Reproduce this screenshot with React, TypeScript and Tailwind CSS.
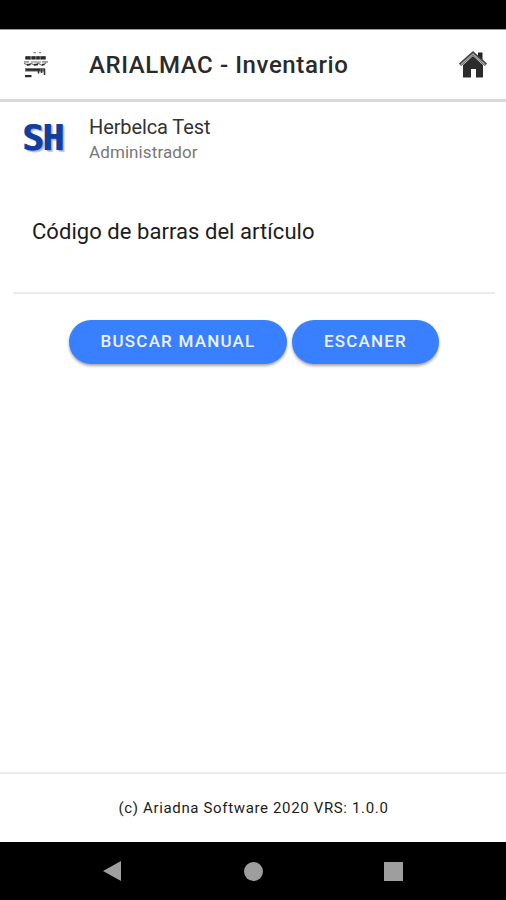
const MenuIcon = () => (
  <svg width="28" height="30" viewBox="0 0 28 30" fill="#2a2a2a">
    <rect x="11.5" y="2" width="2.5" height="1.2" fill="#888" />
    <rect x="17" y="2" width="2" height="1.2" fill="#888" />
    <rect x="3" y="6.2" width="21" height="3.4" fill="#666" />
    <rect x="4" y="6.4" width="4" height="2.8" />
    <rect x="10" y="6.4" width="3" height="2.8" />
    <rect x="14.5" y="6.4" width="3" height="2.8" />
    <rect x="19" y="6.4" width="4" height="2.8" />
    <path
      d="M2 11.8h5M9 12h10M20 11.8h6M2 13.2l4 2.2 3-2 4 2 3-2.2 4 2.2 4-2.4"
      fill="none"
      stroke="#777"
      strokeWidth="1.2"
    />
    <rect x="5" y="13.8" width="3.5" height="1.6" />
    <rect x="12" y="13.8" width="4" height="1.6" />
    <rect x="20" y="13.8" width="2.5" height="1.6" />
    <rect x="3" y="18" width="20" height="3.6" fill="#777" />
    <path d="M4 19.8h14" stroke="#222" strokeWidth="1.6" />
    <path d="M16.5 20v3.5M19.5 19v4M22.5 19v6" stroke="#333" strokeWidth="1.6" />
    <rect x="3" y="25" width="6.5" height="2.2" />
  </svg>
);

const HomeIcon = () => (
  <svg width="30" height="28" viewBox="0 0 30 28">
    <path d="M20 1.5h4.5V10L20 6z" fill="#222" />
    <path d="M5 14 15 5l10 9v12.5h-7V18h-5v8.5H5z" fill="#2b2b2b" />
    <path d="M2 13.8 15 2.2l13 11.6" fill="none" stroke="#444" strokeWidth="3.2" />
    <path d="M2.8 13.8 15 3l12.2 10.8" fill="none" stroke="#a8a8a8" strokeWidth="1.3" />
  </svg>
);

const Logo = () => (
  <div className="font-['DejaVu_Sans_Mono',monospace] font-bold text-[36px] leading-[46px] tracking-[-1.5px] whitespace-nowrap text-[#123f9e] [text-shadow:1px_0_0_#123f9e,2px_1px_1px_#93a7db,3px_2px_1px_#c3cce8]">
    SH
  </div>
);

const buttonClass =
  "h-11 rounded-full bg-[#3880ff] text-[#ebf2ff] text-[17px] font-medium tracking-[1.2px] pb-[1px] shadow-[0_2px_3px_rgba(0,0,0,0.35)]";

const App = () => {
  return (
    <div className="flex flex-col h-[900px] w-full bg-white text-[#1c1c1c] font-['Roboto',sans-serif]">
      <div className="h-[29px] bg-black shrink-0" />

      <header className="flex items-center h-[73px] shrink-0 border-t border-t-[#999] border-b-3 border-b-[#d9d9d9] pl-[22px] pr-[18px]">
        <button className="w-[67px]" aria-label="Menu">
          <MenuIcon />
        </button>
        <h1 className="text-2xl font-medium whitespace-nowrap tracking-[0.6px] text-[#2a2a2a]">
          ARIALMAC - Inventario
        </h1>
        <button className="ml-auto" aria-label="Home">
          <HomeIcon />
        </button>
      </header>

      <main className="flex-1">
        <div className="flex pl-[22px] pt-[13px] h-[90px]">
          <div className="w-[67px]">
            <Logo />
          </div>
          <div>
            <h2 className="text-xl leading-[24px] tracking-[-0.1px] text-[#333]">
              Herbelca Test
            </h2>
            <p className="text-[17px] leading-[26px] tracking-[0.1px] text-[#777]">
              Administrador
            </p>
          </div>
        </div>

        <div className="ml-[13px] mr-[11px] h-[102px] border-b-2 border-[#ebebeb] pl-[19px] pt-[25px]">
          <label className="text-[22px] leading-[30px] tracking-[0.05px]">
            Código de barras del artículo
          </label>
        </div>

        <div className="flex justify-center gap-[5px] pt-[26px] pl-[2px]">
          <button className={`${buttonClass} w-[218px]`}>BUSCAR MANUAL</button>
          <button className={`${buttonClass} w-[147px]`}>ESCANER</button>
        </div>
      </main>

      <footer className="flex items-center justify-center h-[70px] shrink-0 border-t-2 border-[#ebebeb] pl-[1px] text-[15px] tracking-[0.65px]">
        (c) Ariadna Software 2020 VRS: 1.0.0
      </footer>

      <nav className="flex items-center justify-between h-[58px] shrink-0 bg-black pl-[102px] pr-[103px]">
        <svg width="20" height="22" viewBox="0 0 20 22" fill="#9e9e9e">
          <path d="M1 11 19 1v20z" />
        </svg>
        <div className="size-[19px] rounded-full bg-[#9e9e9e]" />
        <div className="size-[19px] bg-[#9e9e9e]" />
      </nav>
    </div>
  );
};

export default App;
